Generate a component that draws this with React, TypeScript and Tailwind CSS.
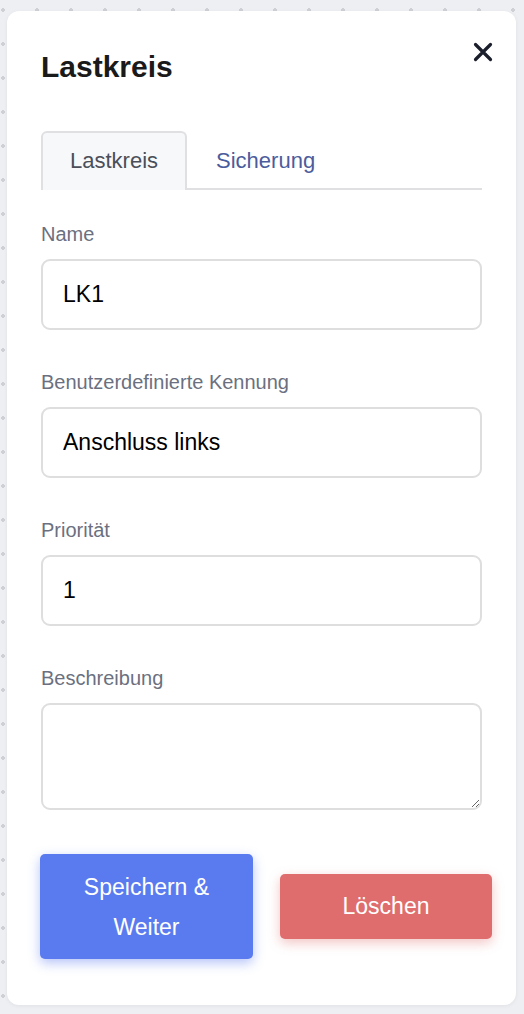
import React from 'react';

const fields = [
  { label: 'Name', value: 'LK1' },
  { label: 'Benutzerdefinierte Kennung', value: 'Anschluss links' },
  { label: 'Priorität', value: '1' },
];

function CloseIcon() {
  return (
    <svg viewBox="0 0 20 20" className="h-5 w-5" fill="none" stroke="#1b1f2b" strokeWidth="3.2" strokeLinecap="round">
      <path d="M2.5 2.5l15 15M17.5 2.5l-15 15" />
    </svg>
  );
}

export default function App() {
  return (
    <div
      className="min-h-[1014px] w-[524px] bg-[#eeeff3] bg-[radial-gradient(circle,#cfd0d6_1.6px,transparent_1.8px)] bg-[length:34px_34px] bg-[position:-14px_-7px] pt-[11px] pl-[7px] pr-[8px] pb-[9px] font-['Liberation_Sans',Arial,sans-serif]"
    >
      <div className="relative h-[994px] rounded-[12px] bg-white px-[34px] pt-[38px] shadow-[0_1px_4px_rgba(0,0,0,0.06)]">
        <button className="absolute right-[23px] top-[31px]">
          <CloseIcon />
        </button>

        <h1 className="text-[30px] font-bold leading-[36px] text-[#1a1a1a]">Lastkreis</h1>

        <div className="mt-[46px] flex border-b-2 border-[#e0e0e2]">
          <div className="-mb-[2px] rounded-t-[6px] border-2 border-b-0 border-[#e0e0e2] bg-[#f7f8fa] px-[27px] pt-[15px] pb-[17px] text-[22px] leading-[25px] text-[#4a4f59]">
            Lastkreis
          </div>
          <div className="px-[29px] pt-[17px] pb-[15px] text-[22px] leading-[25px] text-[#4b5c9d]">
            Sicherung
          </div>
        </div>

        <div className="mt-[32px]">
          {fields.map((f) => (
            <div key={f.label} className="mb-[40px]">
              <label className="mb-[13px] block text-[20px] leading-[24px] text-[#6b7080]">{f.label}</label>
              <input
                readOnly
                value={f.value}
                className="h-[71px] w-full rounded-[9px] border-2 border-[#dedede] bg-white px-[20px] text-[23px] text-black outline-none"
              />
            </div>
          ))}
          <div>
            <label className="mb-[13px] block text-[20px] leading-[24px] text-[#6b7080]">Beschreibung</label>
            <textarea
              readOnly
              className="block h-[107px] w-full rounded-[9px] border-2 border-[#dedede] bg-white px-[20px] py-[14px] text-[23px] outline-none"
            />
          </div>
        </div>

        <div className="-ml-px mt-[44px] flex w-[452px] items-center justify-between">
          <button className="w-[213px] rounded-[5px] bg-[#5a7bef] py-[12.5px] text-[23px] leading-[40px] text-white shadow-[0_4px_12px_rgba(90,123,239,0.45)]">
            Speichern &amp;
            <br />
            Weiter
          </button>
          <button className="h-[65px] w-[212px] rounded-[5px] bg-[#e06d6d] text-[23px] text-white shadow-[0_4px_12px_rgba(224,109,109,0.4)]">
            Löschen
          </button>
        </div>
      </div>
    </div>
  );
}
